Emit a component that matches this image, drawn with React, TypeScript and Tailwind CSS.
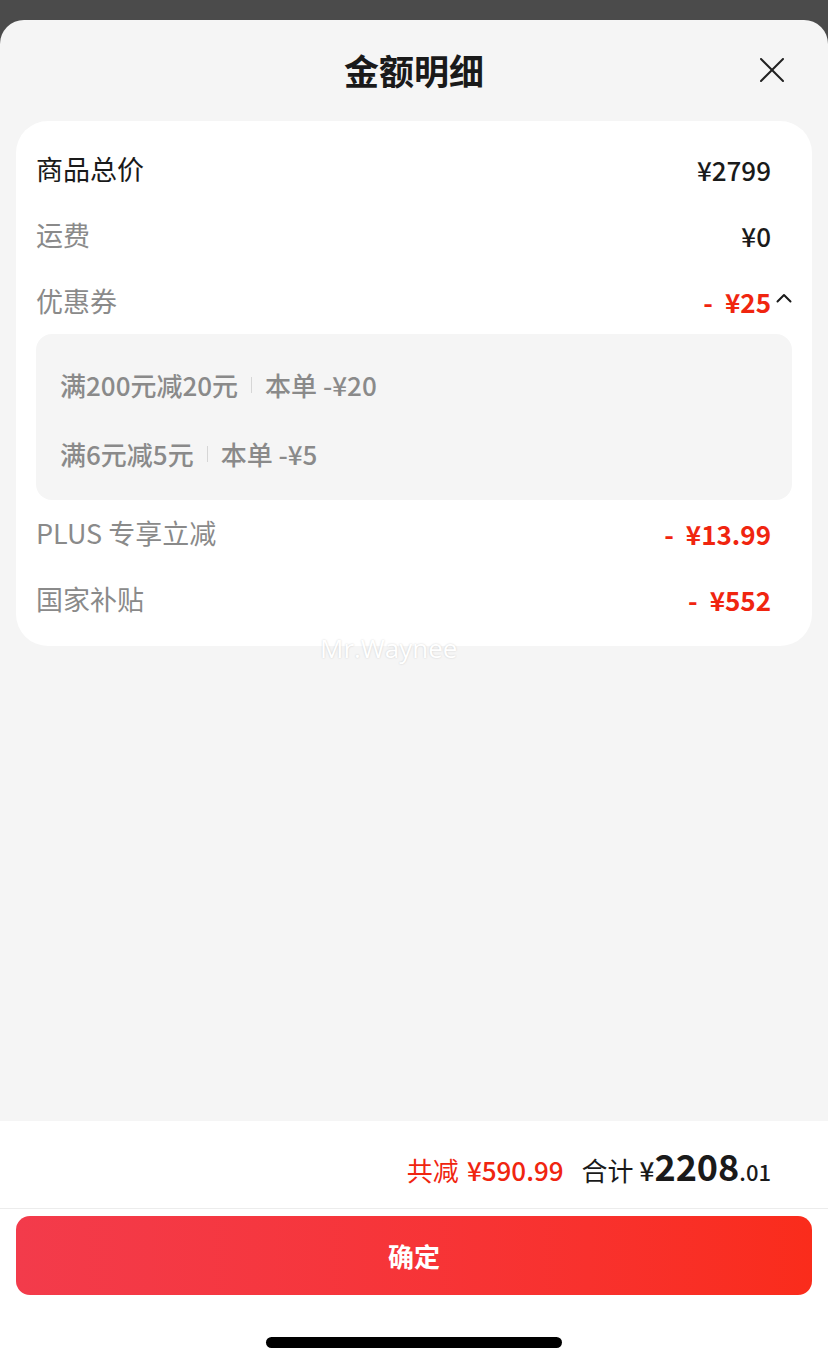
import React from "react";

const font = { fontFamily: '"Noto Sans CJK SC", "Noto Sans", sans-serif' };

const Row = ({
  label,
  value,
  dark,
  red,
  chevron,
}: {
  label: string;
  value: string;
  dark?: boolean;
  red?: boolean;
  chevron?: boolean;
}) => (
  <div className="flex h-[66px] items-center justify-between">
    <span className={`text-[27px] ${dark ? "text-[#1a1a1a]" : "text-[#8a8a8a]"}`}>{label}</span>
    <div className="flex items-center">
      {red ? (
        <span className="flex items-center text-[26px] font-bold text-[#f0250f]">
          <span className="mr-[12px]">-</span>
          {value}
        </span>
      ) : (
        <span className="text-[26px] font-medium text-[#1a1a1a]">{value}</span>
      )}
      <div className="flex w-[21px] justify-end">
        {chevron && (
          <svg width="16" height="10" viewBox="0 0 16 10" fill="none" className="mb-[6px]">
            <path d="M1.5 8.5L8 2l6.5 6.5" stroke="#1a1a1a" strokeWidth="2" strokeLinecap="round" strokeLinejoin="round" />
          </svg>
        )}
      </div>
    </div>
  </div>
);

const Coupon = ({ name, amount }: { name: string; amount: string }) => (
  <div className="flex h-[69px] items-center text-[26px] font-medium text-[#8a8a8a]">
    <span>{name}</span>
    <span className="mx-[13px] h-[16px] w-px bg-[#d6d6d6]" />
    <span>本单 {amount}</span>
  </div>
);

export default function App() {
  return (
    <div className="flex h-[1364px] w-full flex-col bg-[#4b4b4b]" style={font}>
      <div className="h-[20px] shrink-0" />
      <div className="flex flex-1 flex-col overflow-hidden rounded-t-[24px] bg-[#f5f5f5]">
        <div className="relative flex h-[101px] shrink-0 items-center justify-center">
          <h1 className="text-[35px] font-bold text-[#1a1a1a]">金额明细</h1>
          <svg
            className="absolute right-[44px] top-[38px]"
            width="24"
            height="24"
            viewBox="0 0 24 24"
            fill="none"
          >
            <path d="M1 1l22 22M23 1L1 23" stroke="#222" strokeWidth="2" strokeLinecap="round" />
          </svg>
        </div>

        <div className="relative mx-[16px] rounded-[32px] bg-white px-[20px] pb-[14px] pt-[15px]">
          <Row label="商品总价" value="¥2799" dark />
          <Row label="运费" value="¥0" />
          <Row label="优惠券" value="¥25" red chevron />
          <div className="rounded-[16px] bg-[#f5f5f5] pb-[12px] pl-[24px] pt-[16px]">
            <Coupon name="满200元减20元" amount="-¥20" />
            <Coupon name="满6元减5元" amount="-¥5" />
          </div>
          <Row label="PLUS 专享立减" value="¥13.99" red />
          <Row label="国家补贴" value="¥552" red />
          <span
            className="absolute left-[304px] top-[513px] text-[26px] leading-[28px] text-white [text-shadow:0_0_2px_rgba(0,0,0,0.18)]"
            style={{ fontFamily: '"Open Sans", sans-serif' }}
          >
            Mr.Waynee
          </span>
        </div>

        <div className="flex-1" />

        <div className="flex h-[88px] shrink-0 items-center justify-end border-b border-[#ececec] bg-white pr-[57px]">
          <div className="flex items-baseline">
            <span className="text-[26px] text-[#f0250f]">共减</span>
            <span className="ml-[8px] text-[26px] font-medium text-[#f0250f]">¥590.99</span>
            <span className="ml-[18px] text-[26px] text-[#1a1a1a]">合计</span>
            <span className="ml-[6px] text-[26px] font-medium text-[#1a1a1a]">¥</span>
            <span className="text-[36px] font-bold text-[#1a1a1a]">2208</span>
            <span className="text-[22px] font-medium text-[#1a1a1a]">.01</span>
          </div>
        </div>

        <div className="flex h-[155px] shrink-0 flex-col items-center bg-white px-[16px] pt-[7px]">
          <button className="flex h-[79px] w-full items-center justify-center rounded-[14px] bg-gradient-to-r from-[#f33b4b] to-[#fa2c1b] text-[26px] font-bold text-white">
            确定
          </button>
          <div className="mt-[42px] h-[11px] w-[296px] rounded-full bg-black" />
        </div>
      </div>
    </div>
  );
}
